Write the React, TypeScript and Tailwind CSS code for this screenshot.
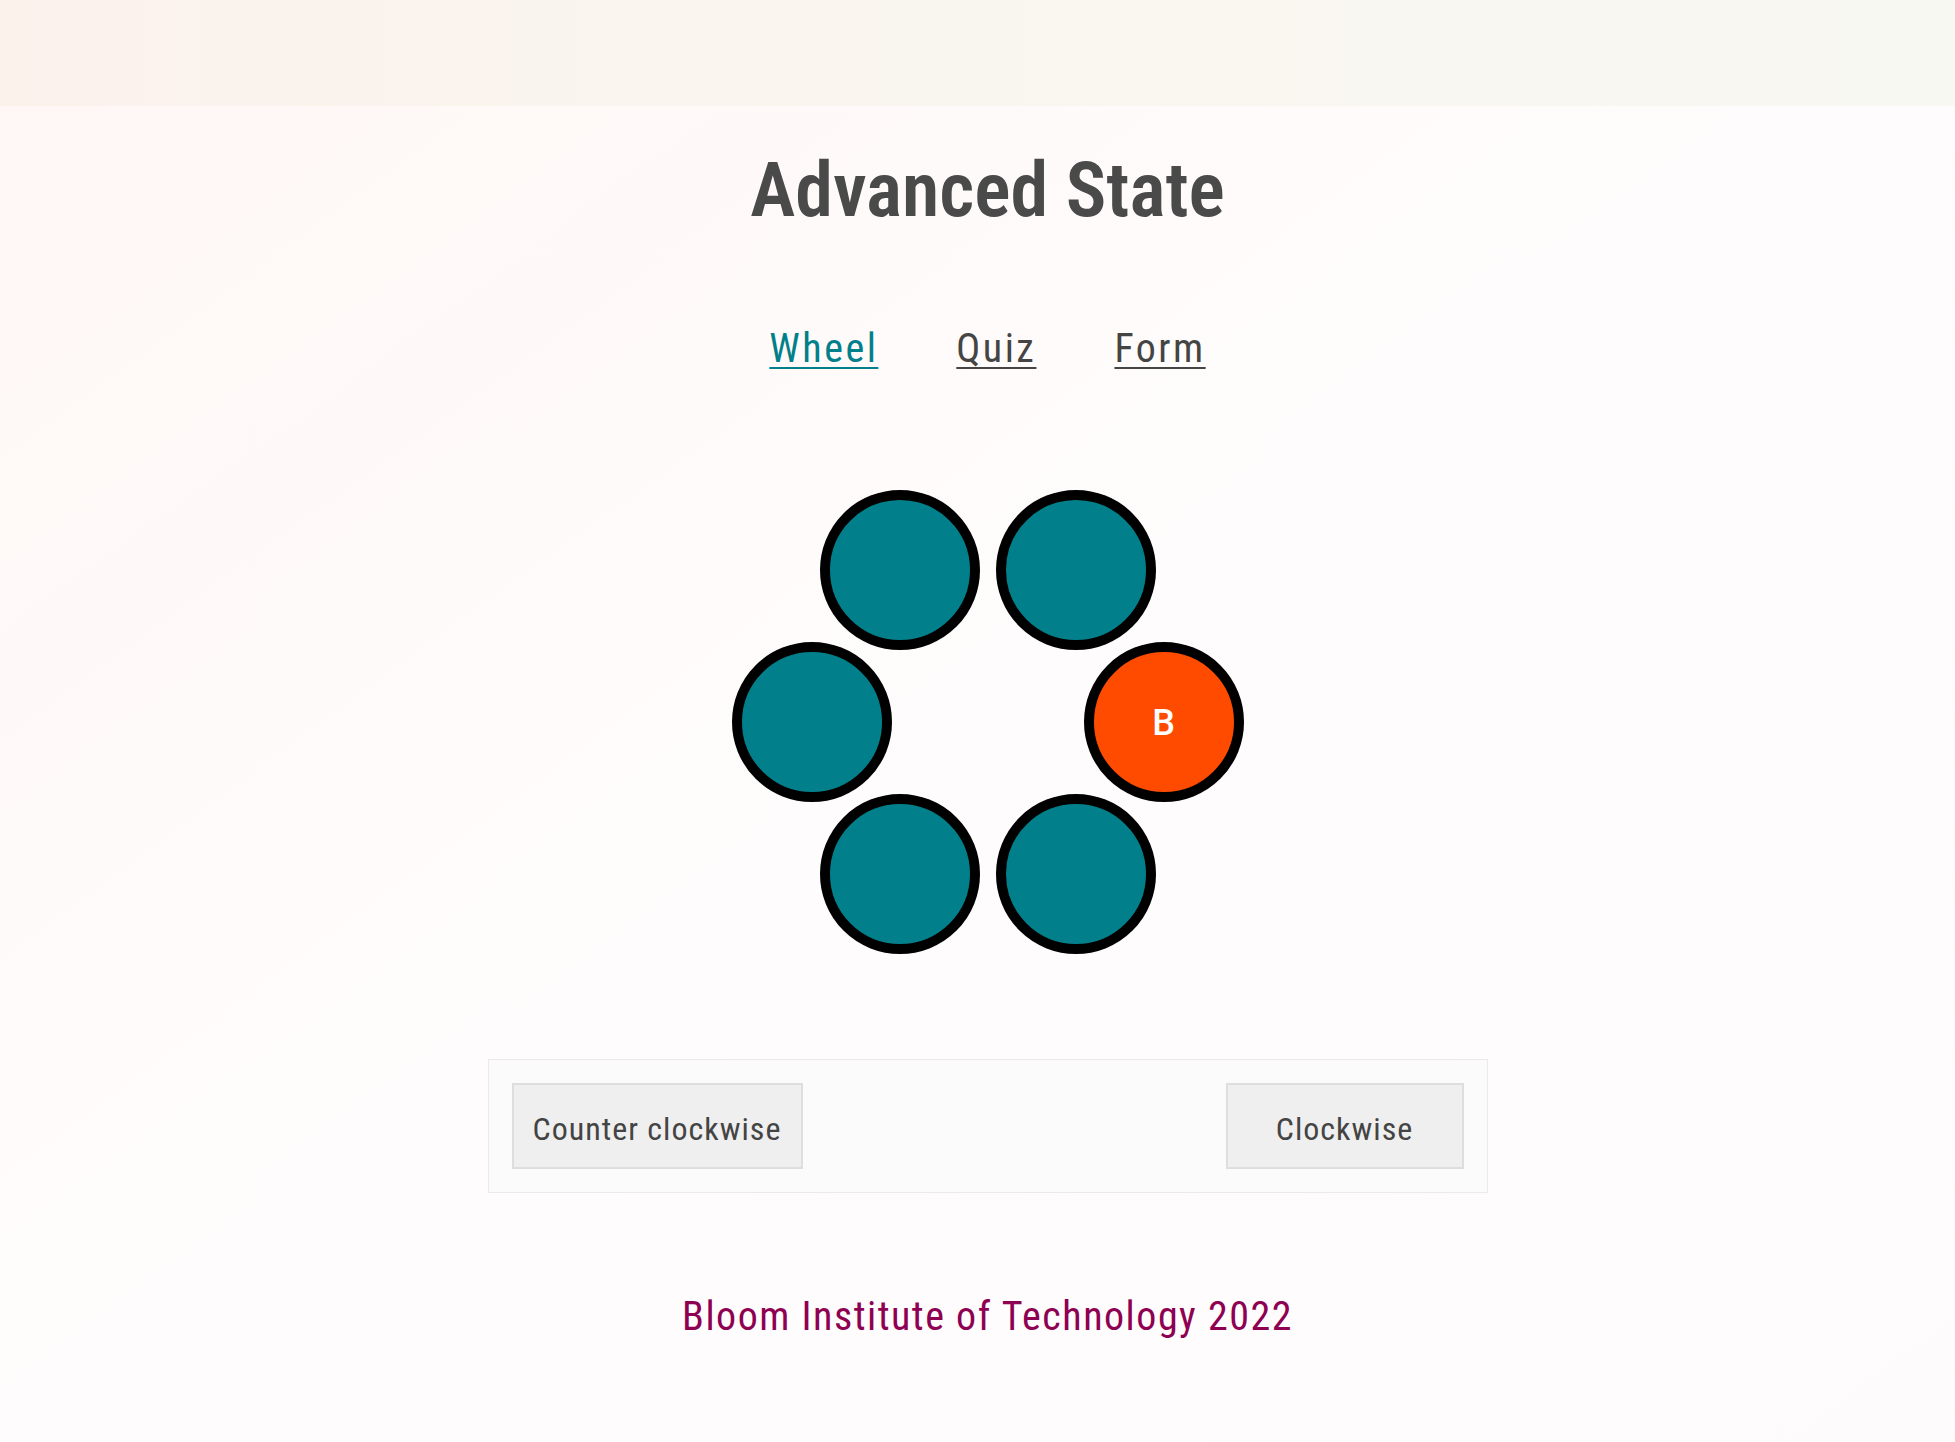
const cogs = [0, 1, 2, 3, 4, 5];
const activeCog = 0;

function Wheel() {
  // hexagon of cogs, point 0 sits on the right, then clockwise
  return (
    <div className="relative mx-auto mt-[118px] h-[470px] w-[520px]">
      {cogs.map((i) => {
        const angle = (i * Math.PI) / 3;
        const left = 260 + 176 * Math.cos(angle) - 80;
        const top = 235 + 176 * Math.sin(angle) - 80;
        const active = i === activeCog;
        return (
          <div
            key={i}
            style={{ left, top }}
            className={
              active
                ? "absolute flex h-[160px] w-[160px] items-center justify-center rounded-full border-[10px] border-black bg-[#ff4b00] pt-[2px] font-['Roboto',sans-serif] text-[36px] font-medium text-white"
                : "absolute h-[160px] w-[160px] rounded-full border-[10px] border-black bg-[#01808b]"
            }
          >
            {active ? "B" : ""}
          </div>
        );
      })}
    </div>
  );
}

export default function App() {
  return (
    <div className="min-h-screen bg-gradient-to-br from-[#fff7f5] via-[#fefcfc] to-[#fdfbfb] font-['Roboto_Condensed','DejaVu_Sans_Condensed',sans-serif] text-[#444]">
      <div className="h-[106px] bg-gradient-to-r from-[#fbf2ec] via-[#f9f6ef] to-[#f8f8f3]" />
      <div className="pl-[20px]">
        <h1 className="mt-[46px] text-center text-[76px] font-semibold leading-[76px] text-[#4a4a4a]">
          Advanced State
        </h1>
        <nav className="mt-[101px] flex justify-center gap-[78px] text-[40px] leading-[40px] tracking-[2.5px]">
          <a href="#" className="text-[#01808b] underline decoration-2 underline-offset-[5px]">
            Wheel
          </a>
          <a href="#" className="text-[#444] underline decoration-2 underline-offset-[5px]">
            Quiz
          </a>
          <a href="#" className="text-[#444] underline decoration-2 underline-offset-[5px]">
            Form
          </a>
        </nav>
        <Wheel />
        <div className="mx-auto mt-[102px] flex w-[1000px] items-center justify-between border border-[#ebebeb] bg-[#fbfbfb] p-[23px]">
          <button className="h-[86px] w-[291px] border-2 border-[#dedede] bg-[#efefef] pt-[5px] text-[32px] tracking-[1px] text-[#444]">
            Counter clockwise
          </button>
          <button className="h-[86px] w-[238px] border-2 border-[#dedede] bg-[#efefef] pt-[5px] text-[32px] tracking-[1px] text-[#444]">
            Clockwise
          </button>
        </div>
        <footer className="mt-[104px] text-center text-[40px] leading-[40px] tracking-[1.5px] text-[#8e0052]">
          Bloom Institute of Technology 2022
        </footer>
      </div>
    </div>
  );
}
